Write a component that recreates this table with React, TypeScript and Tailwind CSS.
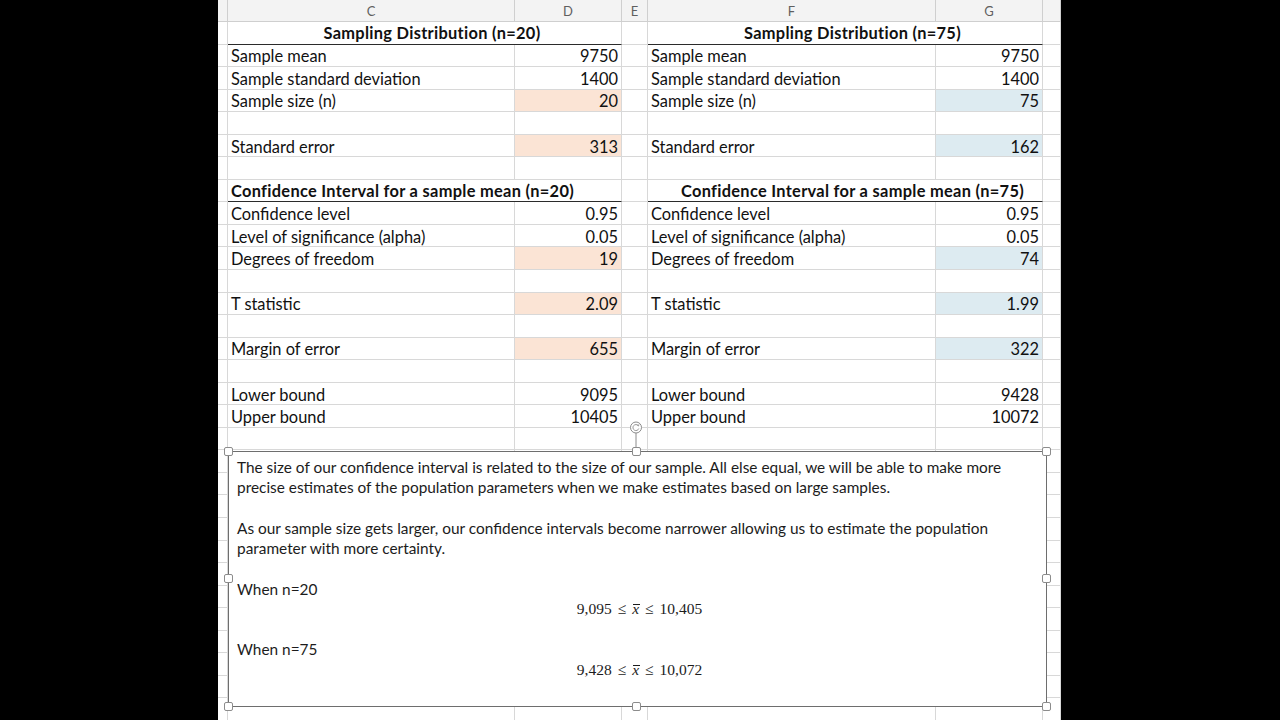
import React from 'react';

type Side = { label: string; value: string; fill?: boolean; title?: 'center' | 'left' };

const COLS = 'grid grid-cols-[10px_287px_107px_26px_288px_107px_18px] grid-rows-[100%]';
const CELL = 'border-r border-b border-[#d8d8d8] h-full min-h-0 overflow-hidden';

const left: Side[] = [
  { label: 'Sampling Distribution (n=20)', value: '', title: 'center' },
  { label: 'Sample mean', value: '9750' },
  { label: 'Sample standard deviation', value: '1400' },
  { label: 'Sample size (n)', value: '20', fill: true },
  { label: '', value: '' },
  { label: 'Standard error', value: '313', fill: true },
  { label: '', value: '' },
  { label: 'Confidence Interval for a sample mean (n=20)', value: '', title: 'left' },
  { label: 'Confidence level', value: '0.95' },
  { label: 'Level of significance (alpha)', value: '0.05' },
  { label: 'Degrees of freedom', value: '19', fill: true },
  { label: '', value: '' },
  { label: 'T statistic', value: '2.09', fill: true },
  { label: '', value: '' },
  { label: 'Margin of error', value: '655', fill: true },
  { label: '', value: '' },
  { label: 'Lower bound', value: '9095' },
  { label: 'Upper bound', value: '10405' },
];

const right: Side[] = [
  { label: 'Sampling Distribution (n=75)', value: '', title: 'center' },
  { label: 'Sample mean', value: '9750' },
  { label: 'Sample standard deviation', value: '1400' },
  { label: 'Sample size (n)', value: '75', fill: true },
  { label: '', value: '' },
  { label: 'Standard error', value: '162', fill: true },
  { label: '', value: '' },
  { label: 'Confidence Interval for a sample mean (n=75)', value: '', title: 'center' },
  { label: 'Confidence level', value: '0.95' },
  { label: 'Level of significance (alpha)', value: '0.05' },
  { label: 'Degrees of freedom', value: '74', fill: true },
  { label: '', value: '' },
  { label: 'T statistic', value: '1.99', fill: true },
  { label: '', value: '' },
  { label: 'Margin of error', value: '322', fill: true },
  { label: '', value: '' },
  { label: 'Lower bound', value: '9428' },
  { label: 'Upper bound', value: '10072' },
];

const TOTAL_ROWS = 31;

const Pair = ({ side, fillClass }: { side?: Side; fillClass: string }) => {
  if (side?.title) {
    return (
      <div
        className={`col-span-2 h-full min-h-0 border-r border-b border-r-[#d8d8d8] border-b-[#2b2b2b] font-bold tracking-[0.3px] flex items-center pr-[3px] whitespace-nowrap ${
          side.title === 'center' ? 'justify-center pl-[18px]' : 'justify-start pl-[3px]'
        }`}
      >
        {side.label}
      </div>
    );
  }
  return (
    <>
      <div className={`${CELL} flex items-center px-[3px] pt-[2px] whitespace-nowrap`}>{side?.label}</div>
      <div className={`${CELL} flex items-center justify-end px-[3px] pt-[2px] ${side?.fill ? fillClass : ''}`}>
        {side?.value}
      </div>
    </>
  );
};

const Handle = ({ pos }: { pos: string }) => (
  <div className={`absolute w-[9px] h-[9px] bg-white border border-[#8c8c8c] rounded-[2px] ${pos}`} />
);

const XBar = () => (
  <span className="relative italic">
    x<span className="absolute left-[1px] right-[-1px] top-[4px] h-[1px] bg-[#1c1c1c]" />
  </span>
);

const Equation = ({ lo, hi }: { lo: string; hi: string }) => (
  <div className="text-center font-['Liberation_Serif',serif] text-[15.5px] pr-[4px]">
    {lo}
    <span className="mx-[6px]">≤</span>
    <XBar />
    <span className="mx-[6px]">≤</span>
    {hi}
  </div>
);

export default function App() {
  const rows = Array.from({ length: TOTAL_ROWS }, (_, i) => i);

  return (
    <div className="w-[1280px] h-[720px] bg-black flex overflow-hidden">
      <div className="w-[218px] shrink-0" />
      <div className="relative w-[843px] h-[720px] shrink-0 bg-white overflow-hidden font-['Lato',sans-serif] text-[16.4px] leading-[20px] text-[#111]">
        {/* column headers */}
        <div className={`${COLS} h-[22px] bg-[#f3f3f3] text-[13px] text-[#5f5f5f]`}>
          {['', 'C', 'D', 'E', 'F', 'G', ''].map((c, i) => (
            <div key={i} className="border-r border-b border-[#cfcfcf] flex items-center justify-center">
              {c}
            </div>
          ))}
        </div>

        {/* cell rows */}
        {rows.map((r) => (
          <div key={r} className={`${COLS} h-[22.56px]`}>
            <div className={CELL} />
            <Pair side={left[r]} fillClass="bg-[#fbe4d5]" />
            <div className={CELL} />
            <Pair side={right[r]} fillClass="bg-[#ddebf1]" />
            <div className={CELL} />
          </div>
        ))}

        {/* rotate handle */}
        <svg className="absolute left-[411px] top-[421px]" width="14" height="31" viewBox="0 0 14 31">
          <circle cx="7" cy="6.5" r="5.5" fill="white" stroke="#8c8c8c" strokeWidth="1" />
          <path d="M9.3 4.7 A3 3 0 1 0 9.8 7.5" fill="none" stroke="#8c8c8c" strokeWidth="0.9" />
          <path d="M8.2 4.1 L9.6 4.8 L9.9 3.3" fill="none" stroke="#8c8c8c" strokeWidth="0.9" />
          <line x1="7" y1="12" x2="7" y2="31" stroke="#8c8c8c" strokeWidth="1" />
        </svg>

        {/* text box */}
        <div className="absolute left-[10px] top-[451px] w-[819px] h-[256px] bg-white border border-[#6e6e6e]">
          <div className="pl-[8px] pt-[5px] text-[15.4px] leading-[20.25px] text-[#1c1c1c]">
            <div className="whitespace-nowrap">
              The size of our confidence interval is related to the size of our sample. All else equal, we will be able to make more
              <br />
              precise estimates of the population parameters when we make estimates based on large samples.
            </div>
            <div className="h-[20.25px]" />
            <div className="whitespace-nowrap">
              As our sample size gets larger, our confidence intervals become narrower allowing us to estimate the population
              <br />
              parameter with more certainty.
            </div>
            <div className="h-[20.25px]" />
            <div>When n=20</div>
            <Equation lo="9,095" hi="10,405" />
            <div className="h-[20.25px]" />
            <div>When n=75</div>
            <Equation lo="9,428" hi="10,072" />
          </div>
          <Handle pos="-left-[5px] -top-[5px]" />
          <Handle pos="left-[403px] -top-[5px]" />
          <Handle pos="-right-[5px] -top-[5px]" />
          <Handle pos="-left-[5px] top-[122px]" />
          <Handle pos="-right-[5px] top-[122px]" />
          <Handle pos="-left-[5px] -bottom-[5px]" />
          <Handle pos="left-[403px] -bottom-[5px]" />
          <Handle pos="-right-[5px] -bottom-[5px]" />
        </div>
      </div>
      <div className="flex-1" />
    </div>
  );
}
